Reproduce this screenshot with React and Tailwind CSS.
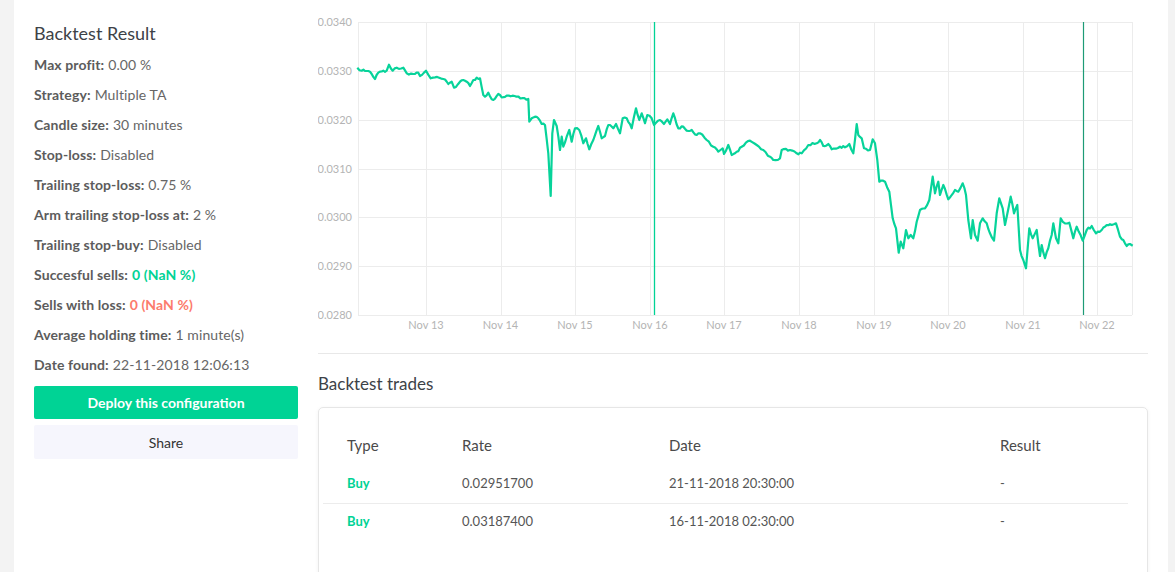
import React from "react";

const FONT = { fontFamily: "Lato, 'Noto Sans', sans-serif" };

const RAW = [
[357.3,67.7],[361.7,70.7],[366.7,71],[370,71.7],[375,79],[378.3,72.7],[383.3,70.7],[386.7,70.7],[389,64.7],[392.7,70.7],[396.7,67.7],[403.3,67.7],[406.7,73.3],[413.3,74],[418.3,72.7],[420,76],[426,70.7],[430.7,78.3],[435,77.3],[443.3,79],[448.3,84],[451.7,81.7],[454,87.7],[460,81.7],[463.3,80],[466.7,81.7],[470,86],[473.3,80],[476.7,77.7],[480,78.3],[483.3,95],[485,96.7],[488.3,92.7],[491.7,99.3],[495,98.7],[498.3,94],[501.7,97.3],[506.7,95.7],[528.3,99],[529.3,121.7],[531.7,118.3],[535,116.7],[538.3,118.3],[541.7,124],[545,125],[548.3,153.3],[550.7,196],[552.3,133.3],[554,120],[556.7,126],[560,150],[561.7,136.7],[563.3,146.7],[566.7,136.7],[569.3,130],[571.7,141.7],[575,128.3],[579.3,130],[583.3,143.3],[586,138.3],[589.3,149.3],[593.3,140],[598.3,126],[601.7,138.3],[605,136],[608.3,125],[613.3,128.3],[616,124],[620,133.3],[622.7,118.3],[626.7,118.3],[631.7,128.3],[636,108.3],[639.3,120],[641.7,113.3],[645,123.3],[647.3,115],[651.7,118.3],[654,125],[660,120],[664,124],[667.3,119.3],[670,124],[673.3,113.3],[678.3,128.3],[683.3,126.7],[686.7,130.7],[691.7,130],[696.7,135],[700,133.3],[706.7,140],[713.3,146.7],[718.3,151.7],[722.7,148.3],[724,154],[728.3,145],[731.7,155],[736.7,151.7],[741.7,146.7],[750,140.7],[756.7,145],[763.3,150],[770,156.7],[773.3,160],[780,158.3],[781.7,150],[790,150],[796.7,153.3],[801.7,153.3],[808.3,145],[816.7,143.3],[820,140],[823.3,146],[828.3,144],[831.7,149.3],[840,146.7],[845,147.3],[849.3,144],[853.3,153.3],[856.7,124],[858.3,135],[861.7,138.3],[864,148.3],[870,150],[872.7,139.3],[875,143.3],[877.3,160],[879.3,181.7],[885,181.7],[889.3,191.7],[892.7,218.3],[896,228.3],[898.7,252.7],[900.7,241.7],[903.3,248.3],[906,230],[908.3,238.3],[910.7,235],[913.3,238.3],[916.7,221.7],[920,210],[925,208.3],[929.3,200],[932.7,176.7],[935,193.3],[938.3,181.7],[940,195],[943.3,185],[948.3,199.3],[955,190],[958.3,191.7],[962.7,183.3],[966,195],[968.3,220],[971,238.3],[972.7,220],[975,235],[977.7,240.7],[980,223.3],[982.7,218.3],[986.7,223.3],[990,233.3],[994,240.7],[996.7,213.3],[999.3,198.3],[1002.7,208.3],[1005,225],[1006.7,216.7],[1010.7,196.7],[1014,213.3],[1017.3,205],[1020,250],[1023.3,260],[1026,268.3],[1029.3,228.3],[1032.7,238.3],[1036.7,230],[1040,256],[1041.7,245],[1045,258.3],[1048.3,248.3],[1051.7,235],[1053.3,223.3],[1056,238.3],[1058.3,243.3],[1060.7,218.3],[1065,223.3],[1069.3,222.7],[1073.3,238.3],[1076.7,226.7],[1082.7,240.7],[1086.7,230],[1091.7,226],[1096,233.3],[1101.7,230],[1106.7,225],[1111.7,225],[1116,223.3],[1120,236.7],[1123.3,240],[1126.7,246],[1130,244],[1132.7,245.7]
];

const OX = 318;

function buildPath() {
  const pts = [];
  let seed = 1;
  const rnd = () => {
    const v = Math.sin(seed++ * 12.9898) * 43758.5453;
    return v - Math.floor(v);
  };
  for (let i = 0; i < RAW.length - 1; i++) {
    const [x0, y0] = RAW[i];
    const [x1, y1] = RAW[i + 1];
    const steps = Math.max(1, Math.round((x1 - x0) / 2));
    for (let s = 0; s < steps; s++) {
      const t = s / steps;
      let y = y0 + (y1 - y0) * t;
      if (s > 0) y += (rnd() - 0.5) * 2.4;
      pts.push([x0 + (x1 - x0) * t - OX, y]);
    }
  }
  const last = RAW[RAW.length - 1];
  pts.push([last[0] - OX, last[1]]);
  return "M" + pts.map(([x, y]) => `${x.toFixed(1)},${y.toFixed(1)}`).join(" L");
}

const PATH = buildPath();

const Y_LABELS = [
  ["0.0340", 22],
  ["0.0330", 71],
  ["0.0320", 119.5],
  ["0.0310", 168.5],
  ["0.0300", 217],
  ["0.0290", 266],
  ["0.0280", 315],
];

const X_LABELS = [
  ["Nov 13", 426],
  ["Nov 14", 500.5],
  ["Nov 15", 575],
  ["Nov 16", 650],
  ["Nov 17", 724],
  ["Nov 18", 799],
  ["Nov 19", 874],
  ["Nov 20", 948],
  ["Nov 21", 1023],
  ["Nov 22", 1097],
];

function Chart() {
  const L = 358 - OX;
  const R = 1132 - OX;
  const T = 22;
  const B = 315;
  return (
    <svg width="829" height="340" className="block">
      <g stroke="#ececec" strokeWidth="1" shapeRendering="crispEdges">
        {Y_LABELS.map(([, y]) => (
          <line key={y} x1={L} x2={R} y1={Math.round(y) + 0.5} y2={Math.round(y) + 0.5} />
        ))}
        {X_LABELS.map(([, x]) => (
          <line key={x} x1={Math.round(x - OX) + 0.5} x2={Math.round(x - OX) + 0.5} y1={T} y2={B} />
        ))}
        <line x1={L + 0.5} x2={L + 0.5} y1={T} y2={B} />
        <line x1={R + 0.5} x2={R + 0.5} y1={T} y2={B} />
      </g>
      <g fontSize="11" fill="#b4b4b4" style={FONT}>
        {Y_LABELS.map(([t, y]) => (
          <text key={t} x={L - 6} y={y + 4} textAnchor="end">{t}</text>
        ))}
        {X_LABELS.map(([t, x]) => (
          <text key={t} x={x - OX} y={329} textAnchor="middle">{t}</text>
        ))}
      </g>
      <line x1={654.5 - OX} x2={654.5 - OX} y1={T} y2={B} stroke="#00d395" strokeWidth="1.3" />
      <line x1={1083.5 - OX} x2={1083.5 - OX} y1={T} y2={B} stroke="#1d9b76" strokeWidth="1.2" />
      <path d={PATH} fill="none" stroke="#07d39a" strokeWidth="2.2" strokeLinejoin="round" />
    </svg>
  );
}

function Row({ label, children }) {
  return (
    <div className="h-[30px] flex items-center text-[14px] tracking-[0.1px] text-[#666]">
      <span className="font-bold text-[#5c5c5c] mr-1">{label}</span>
      {children}
    </div>
  );
}

export default function App() {
  return (
    <div className="h-[572px] w-[1175px] overflow-hidden bg-[#f3f3f3] flex pl-[14px] pr-[7px]" style={FONT}>
      <div className="flex-1 bg-white flex px-[20px] gap-[20px]">
        <div className="w-[264px] pt-[21px] shrink-0">
          <div className="text-[18px] leading-[24px] text-[#3d4247] mb-[4px]">Backtest Result</div>
          <Row label="Max profit:">0.00 %</Row>
          <Row label="Strategy:">Multiple TA</Row>
          <Row label="Candle size:">30 minutes</Row>
          <Row label="Stop-loss:">Disabled</Row>
          <Row label="Trailing stop-loss:">0.75 %</Row>
          <Row label="Arm trailing stop-loss at:">2 %</Row>
          <Row label="Trailing stop-buy:">Disabled</Row>
          <Row label="Succesful sells:"><span className="text-[#00d395] font-bold">0 (NaN %)</span></Row>
          <Row label="Sells with loss:"><span className="text-[#fc7b6c] font-bold">0 (NaN %)</span></Row>
          <Row label="Average holding time:">1 minute(s)</Row>
          <Row label="Date found:">22-11-2018 12:06:13</Row>
          <button className="mt-[7px] w-full h-[33px] rounded-[2px] bg-[#00d395] text-white text-[14px] font-bold flex items-center justify-center">
            Deploy this configuration
          </button>
          <button className="mt-[6px] w-full h-[34px] rounded-[2px] bg-[#f6f6fd] text-[#333] text-[14px] flex items-center justify-center">
            Share
          </button>
        </div>
        <div className="flex-1 flex flex-col">
          <div className="h-[354px] shrink-0 border-b border-[#e8e8e8]">
            <Chart />
          </div>
          <div className="h-[53px] shrink-0 pt-[6px] flex items-center text-[17px] text-[#3d4247]">Backtest trades</div>
          <div className="h-[220px] shrink-0 border border-[#e6e6e6] rounded-[5px] shadow-[0_1px_4px_rgba(0,0,0,0.05)] pt-[19px] pl-[4px] pr-[19px]">
            <div className="grid grid-cols-[115px_207px_331px_1fr] text-[13px] text-[#555]">
              <div className="h-[38px] flex items-center pl-[24px] pb-[2px] text-[15px] text-[#4a4a4a]">Type</div>
              <div className="h-[38px] flex items-center pl-[24px] pb-[2px] text-[15px] text-[#4a4a4a]">Rate</div>
              <div className="h-[38px] flex items-center pl-[24px] pb-[2px] text-[15px] text-[#4a4a4a]">Date</div>
              <div className="h-[38px] flex items-center pl-[24px] pb-[2px] text-[15px] text-[#4a4a4a]">Result</div>

              <div className="h-[39px] flex items-center pl-[24px] border-b border-[#ececec] text-[#00d395] font-bold">Buy</div>
              <div className="h-[39px] flex items-center pl-[24px] border-b border-[#ececec]">0.02951700</div>
              <div className="h-[39px] flex items-center pl-[24px] border-b border-[#ececec]">21-11-2018 20:30:00</div>
              <div className="h-[39px] flex items-center pl-[24px] border-b border-[#ececec]">-</div>

              <div className="h-[36px] flex items-center pl-[24px] text-[#00d395] font-bold">Buy</div>
              <div className="h-[36px] flex items-center pl-[24px]">0.03187400</div>
              <div className="h-[36px] flex items-center pl-[24px]">16-11-2018 02:30:00</div>
              <div className="h-[36px] flex items-center pl-[24px]">-</div>
            </div>
          </div>
        </div>
      </div>
    </div>
  );
}
